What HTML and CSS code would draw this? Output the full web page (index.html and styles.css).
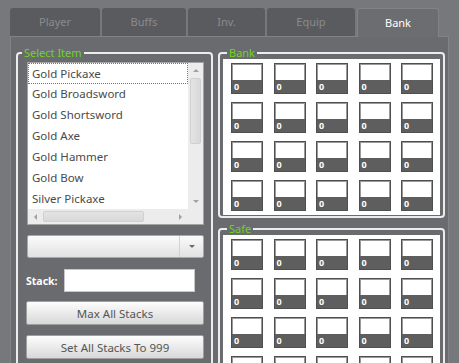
FILE: index.html
```html
<!DOCTYPE html>
<html lang="en">
<head>
    <meta charset="UTF-8">
    <title>Bank</title>
    <link rel="stylesheet" href="styles.css">
</head>
<body>
<div class="window">
    <div class="tabs">
        <div class="tab tab-player">Player</div>
        <div class="tab tab-buffs">Buffs</div>
        <div class="tab tab-inv">Inv.</div>
        <div class="tab tab-equip">Equip</div>
        <div class="tab tab-bank active">Bank</div>
    </div>
    <div class="panel">
        <fieldset class="group">
            <legend>Select Item</legend>
            <div class="item-body">
                <div class="listbox">
                    <div class="list-main">
                        <ul class="items">
                            <li class="focused">Gold Pickaxe</li>
                            <li>Gold Broadsword</li>
                            <li>Gold Shortsword</li>
                            <li>Gold Axe</li>
                            <li>Gold Hammer</li>
                            <li>Gold Bow</li>
                            <li>Silver Pickaxe</li>
                        </ul>
                        <div class="vscroll">
                            <div class="arrow"><span class="tri up"></span></div>
                            <div class="vtrack"><div class="vthumb"></div></div>
                            <div class="arrow"><span class="tri down"></span></div>
                        </div>
                    </div>
                    <div class="list-foot">
                        <div class="hscroll">
                            <div class="arrow"><span class="tri left"></span></div>
                            <div class="htrack"><div class="hthumb"></div></div>
                            <div class="arrow"><span class="tri right"></span></div>
                        </div>
                        <div class="corner"></div>
                    </div>
                </div>
                <div class="combo">
                    <span class="combo-value"></span>
                    <span class="combo-btn"><span class="tri down dark"></span></span>
                </div>
                <div class="stack-row">
                    <label class="stack-label" for="stack">Stack:</label>
                    <input class="stack-input" id="stack" type="text">
                </div>
                <button class="wide-btn">Max All Stacks</button>
                <button class="wide-btn">Set All Stacks To 999</button>
            </div>
        </fieldset>

        <div class="storage">
            <fieldset class="group">
                <legend>Bank</legend>
                <div class="slots">
                    <div class="slot"><span>0</span></div><div class="slot"><span>0</span></div><div class="slot"><span>0</span></div><div class="slot"><span>0</span></div><div class="slot"><span>0</span></div>
                    <div class="slot"><span>0</span></div><div class="slot"><span>0</span></div><div class="slot"><span>0</span></div><div class="slot"><span>0</span></div><div class="slot"><span>0</span></div>
                    <div class="slot"><span>0</span></div><div class="slot"><span>0</span></div><div class="slot"><span>0</span></div><div class="slot"><span>0</span></div><div class="slot"><span>0</span></div>
                    <div class="slot"><span>0</span></div><div class="slot"><span>0</span></div><div class="slot"><span>0</span></div><div class="slot"><span>0</span></div><div class="slot"><span>0</span></div>
                </div>
            </fieldset>
            <fieldset class="group">
                <legend>Safe</legend>
                <div class="slots">
                    <div class="slot"><span>0</span></div><div class="slot"><span>0</span></div><div class="slot"><span>0</span></div><div class="slot"><span>0</span></div><div class="slot"><span>0</span></div>
                    <div class="slot"><span>0</span></div><div class="slot"><span>0</span></div><div class="slot"><span>0</span></div><div class="slot"><span>0</span></div><div class="slot"><span>0</span></div>
                    <div class="slot"><span>0</span></div><div class="slot"><span>0</span></div><div class="slot"><span>0</span></div><div class="slot"><span>0</span></div><div class="slot"><span>0</span></div>
                    <div class="slot"><span>0</span></div><div class="slot"><span>0</span></div><div class="slot"><span>0</span></div><div class="slot"><span>0</span></div><div class="slot"><span>0</span></div>
                </div>
            </fieldset>
        </div>
    </div>
</div>
</body>
</html>
```

FILE: styles.css
```css
html, body {
    margin: 0;
    height: 363px;
    overflow: hidden;
}
body {
    background: #77787c;
    font-family: "Noto Sans", "Open Sans", sans-serif;
    font-size: 11px;
}
.window {
    padding: 8px 0 0 10px;
    width: 439px;
}

/* tabs */
.tabs {
    display: flex;
    gap: 2px;
    height: 28px;
}
.tab {
    box-sizing: border-box;
    height: 28px;
    background: #5a5b5f;
    color: #8a8b8f;
    border-radius: 3px 3px 0 0;
    text-align: center;
    line-height: 28px;
}
.tab-player { width: 90px; }
.tab-buffs { width: 84px; }
.tab-inv { width: 77px; }
.tab-equip { width: 88px; }
.tab-bank { width: 82px; }
.tab.active {
    background: #6c6d71;
    color: #fff;
    height: 29px;
    border: 1px solid #828387;
    border-bottom: none;
    position: relative;
    z-index: 1;
}

/* main panel */
.panel {
    box-sizing: border-box;
    height: 327px;
    background: #6a6b6f;
    border: 1px solid #828387;
    border-bottom: none;
    padding: 10px 3px 0 5px;
    display: grid;
    grid-template-columns: 197px 227px;
    column-gap: 5px;
    align-items: start;
    overflow: hidden;
}
.group {
    margin: 0;
    padding: 0;
    min-width: 0;
    border: 2px solid #ececec;
    border-radius: 4px;
}
.group legend {
    margin-left: 4px;
    padding: 0 2px;
    color: #6fd41f;
    font-size: 11px;
    line-height: 12px;
}

/* left side */
.item-body {
    padding: 3px 7px 12px 9px;
    display: flex;
    flex-direction: column;
}
.listbox {
    border: 1px solid #a3a3a3;
    background: #fff;
}
.list-main {
    display: flex;
    height: 146px;
}
.items {
    flex: 1;
    margin: 0;
    padding: 0;
    list-style: none;
    color: #4a4a4a;
    font-size: 11.5px;
}
.items li {
    box-sizing: border-box;
    height: 21px;
    line-height: 20px;
    padding-left: 4px;
}
.items li.focused {
    border: 1px dotted #777;
    padding-left: 3px;
    line-height: 19px;
}
.vscroll {
    width: 15px;
    display: flex;
    flex-direction: column;
    background: #ececec;
}
.arrow {
    width: 15px;
    height: 15px;
    display: flex;
    align-items: center;
    justify-content: center;
}
.vtrack {
    flex: 1;
    padding: 0 2px;
}
.vthumb {
    height: 64px;
    background: linear-gradient(to right, #e4e4e4, #d8d8d8);
    border: 1px solid #d0d0d0;
    border-radius: 2px;
}
.list-foot {
    display: flex;
    height: 15px;
}
.hscroll {
    flex: 1;
    display: flex;
    background: #ececec;
}
.htrack {
    flex: 1;
    padding: 2px 0;
}
.hthumb {
    box-sizing: border-box;
    width: 101px;
    height: 11px;
    background: linear-gradient(#e4e4e4, #d8d8d8);
    border: 1px solid #d0d0d0;
    border-radius: 2px;
}
.corner {
    width: 15px;
    background: #ececec;
}
.tri {
    width: 0;
    height: 0;
    border: 3px solid transparent;
}
.tri.up { border-bottom: 3px solid #a0a0a0; border-top: none; }
.tri.down { border-top: 3px solid #a0a0a0; border-bottom: none; }
.tri.left { border-right: 3px solid #a0a0a0; border-left: none; }
.tri.right { border-left: 3px solid #a0a0a0; border-right: none; }
.tri.dark { border-top-color: #6a6a6a; }

.combo {
    box-sizing: border-box;
    height: 23px;
    margin-top: 10px;
    display: flex;
    border: 1px solid #a8a8a8;
    border-radius: 2px;
    background: linear-gradient(#fbfbfb, #e1e1e1);
}
.combo-value {
    flex: 1;
}
.combo-btn {
    width: 23px;
    border-left: 1px solid #d2d2d2;
    display: flex;
    align-items: center;
    justify-content: center;
}
.stack-row {
    display: flex;
    align-items: center;
    margin-top: 11px;
    margin-left: -1px;
}
.stack-label {
    width: 38px;
    color: #fff;
    font-weight: bold;
    font-size: 10.5px;
}
.stack-input {
    box-sizing: border-box;
    width: 131px;
    height: 23px;
    margin: 0;
    border: 1px solid #c8c8c8;
    background: #fff;
}
.wide-btn {
    box-sizing: border-box;
    height: 24px;
    margin: 9px 0 0 -1px;
    width: 178px;
    border: 1px solid #9f9f9f;
    border-radius: 2px;
    background: linear-gradient(#fdfdfd, #d8d8d8);
    color: #555;
    font-family: "Noto Sans", "Open Sans", sans-serif;
    font-size: 11.5px;
}
.wide-btn + .wide-btn {
    margin-top: 10px;
}

/* right side */
.storage {
    display: flex;
    flex-direction: column;
    gap: 5px;
}
.storage .group {
    padding: 0 3px 1px 3px;
}
.slots {
    background: #fff;
    padding: 4px 7px 4px 8px;
    display: grid;
    grid-template-columns: repeat(5, 32px);
    justify-content: space-between;
    row-gap: 8px;
}
.slot {
    box-sizing: border-box;
    width: 32px;
    height: 31px;
    border: 1px solid #4f4f4f;
    box-shadow: inset 0 0 0 1px #9a9a9a;
    display: flex;
    flex-direction: column;
    justify-content: flex-end;
    background: #fff;
}
.slot span {
    height: 13px;
    background: #5e5e5e;
    color: #fff;
    font-weight: bold;
    font-size: 9px;
    line-height: 14px;
    padding-left: 2px;
}
```
